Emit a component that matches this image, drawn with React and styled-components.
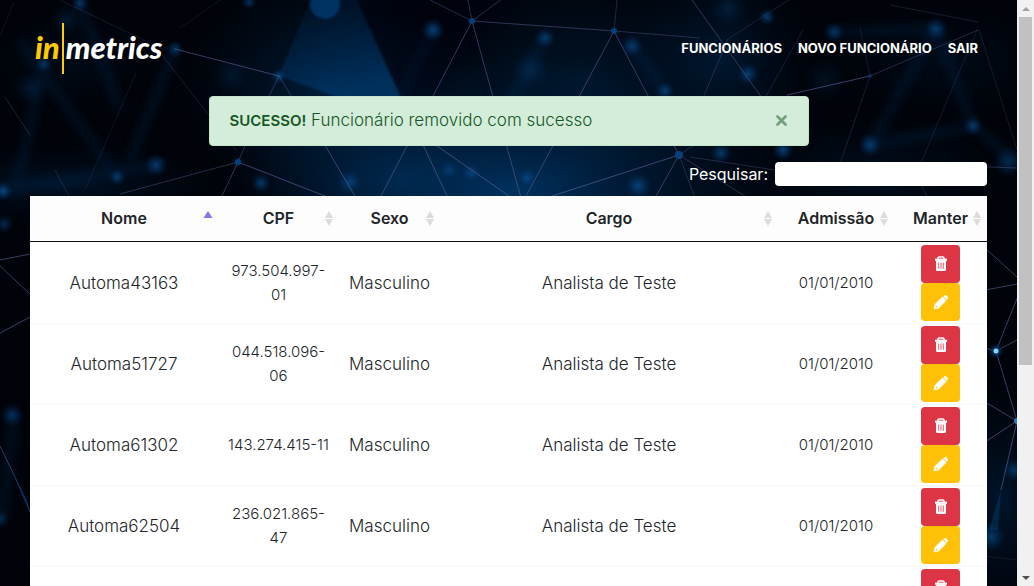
import React from "react";
import styled, { createGlobalStyle, css } from "styled-components";

const GlobalStyle = createGlobalStyle`
  *, *::before, *::after { box-sizing: border-box; }
  body {
    margin: 0;
    background: #00040c;
    color: #212529;
    font-family: Inter, "Open Sans", "Liberation Sans", sans-serif;
    font-size: 16px;
    font-weight: 300;
    line-height: 24px;
  }
`;

const Frame = styled.div`
  display: grid;
  grid-template-columns: minmax(0, 1fr) 17px;
  height: 100vh;
  overflow: hidden;
`;

const Viewport = styled.div`
  display: grid;
  overflow: hidden;
  height: 100vh;
  position: relative;
`;

const Backdrop = styled.svg`
  position: absolute;
  inset: 0;
  width: 100%;
  height: 100%;
`;

const Page = styled.div`
  position: relative;
  height: 100vh;
  overflow-y: auto;
  scrollbar-width: none;
  padding: 0 30px;
`;

const Header = styled.header`
  display: flex;
  justify-content: space-between;
  align-items: center;
  height: 96px;
  padding: 0 9px 0 5px;
`;

const Logo = styled.a`
  display: flex;
  align-items: flex-start;
  gap: 2px;
  color: #fff;
  font: italic 900 31px/48px Lato, sans-serif;
  text-decoration: none;
`;

const LogoAccent = styled.span`
  color: #ffcb05;
`;

const LogoBar = styled.span`
  width: 2px;
  height: 51px;
  background: #ffcb05;
`;

const Nav = styled.nav`
  display: flex;
  gap: 16px;
`;

const NavLink = styled.a`
  color: #fff;
  font-size: 13px;
  font-weight: 700;
  text-decoration: none;
  text-transform: uppercase;
`;

const Alert = styled.div`
  display: flex;
  align-items: center;
  justify-content: space-between;
  width: 100%;
  max-width: 600px;
  height: 50px;
  margin: 0 auto 16px;
  padding: 0 20px 2px;
  border: 1px solid #c3e6cb;
  border-radius: 4px;
  background: #d4edda;
  color: #155724;
  font-size: 17px;
  strong { font-size: 15px; font-weight: 600; }
`;

const CloseButton = styled.button`
  display: flex;
  padding: 0;
  border: 0;
  background: none;
  color: #155724;
  opacity: 0.5;
  cursor: pointer;
`;

const Search = styled.label`
  display: flex;
  justify-content: flex-end;
  align-items: center;
  gap: 7px;
  margin-bottom: 10px;
  color: #fff;
  font-weight: 400;
`;

const SearchInput = styled.input`
  width: 212px;
  height: 24px;
  padding: 0 8px;
  border: 0;
  border-radius: 4px;
  background: #fff;
  font: inherit;
  color: #212529;
`;

const Table = styled.table`
  width: 100%;
  table-layout: fixed;
  border-collapse: separate;
  border-spacing: 0;
  border-radius: 2px;
  background: #fff;
  text-align: center;
`;

const Column = styled.col`
  width: ${(p) => (p.$width ? `${p.$width}px` : "auto")};
`;

const HeadCell = styled.th`
  height: 46px;
  padding: 0 0 1px;
  border-bottom: 1px solid #111;
  background: #fdfdfd;
`;

const SortButton = styled.button`
  display: grid;
  grid-template-columns: minmax(0, 1fr) auto minmax(0, 1fr);
  align-items: center;
  width: 100%;
  padding: 0 5px;
  border: 0;
  background: none;
  color: #212529;
  font: inherit;
  font-weight: 600;
  cursor: pointer;
  svg { grid-column: 3; justify-self: end; }
`;

const SortLabel = styled.span`
  grid-column: 2;
`;

const Cell = styled.td`
  height: 81px;
  padding: 2px 0;
  border-top: 1px solid #f8f9fa;
  vertical-align: middle;
  white-space: pre;
  font-size: ${(p) => (p.$numeric ? "15px" : "17px")};
`;

const Actions = styled.div`
  display: flex;
  flex-direction: column;
  align-items: center;
`;

const ActionButton = styled.button`
  display: flex;
  justify-content: center;
  align-items: center;
  width: 39px;
  height: 38px;
  padding: 0;
  border: 0;
  border-radius: 4px;
  color: #fff;
  cursor: pointer;
  ${(p) => (p.$danger ? css`background: #dc3545;` : css`background: #ffc107;`)}
`;

const ScrollRail = styled.div`
  display: flex;
  flex-direction: column;
  height: 100vh;
  background: #f1f1f1;
`;

const RailArrow = styled.div`
  display: flex;
  justify-content: center;
  align-items: center;
  flex: 0 0 17px;
`;

const RailTrack = styled.div`
  flex: 1;
  padding: 0 2px;
`;

const RailThumb = styled.div`
  height: 63%;
  background: #c1c1c1;
`;

const LINES = [
  [60, 0, 165, 50, 0.25], [175, 49, 279, 76, 0.7], [279, 76, 265, 104, 0.5], [279, 76, 296, 104, 0.5],
  [162, 55, 236, 150, 0.3], [238, 162, 120, 194, 0.5], [238, 162, 330, 198, 0.75], [238, 162, 221, 198, 0.6],
  [238, 162, 252, 130, 0.5], [310, 120, 356, 198, 0.7], [5, 97, 30, 135, 0.35], [136, 73, 85, 190, 0.2],
  [220, 0, 180, 28, 0.2], [55, 170, 70, 198, 0.3], [0, 36, 14, 2, 0.2],
  [430, 0, 472, 21, 0.5], [506, -4, 472, 21, 0.5], [468, 0, 472, 21, 0.5], [472, 21, 614, 31, 0.6],
  [614, 31, 700, 38, 0.45], [472, 21, 380, 198, 0.65], [472, 21, 521, 198, 0.65], [614, 31, 525, 198, 0.65],
  [614, 31, 679, 155, 0.65], [617, 0, 614, 31, 0.4], [400, 96, 448, 198, 0.7], [424, 137, 512, 198, 0.75],
  [679, 155, 546, 198, 0.75], [679, 155, 655, 198, 0.65], [679, 155, 770, 96, 0.4],
  [692, 0, 762, 98, 0.6], [703, 98, 728, 39, 0.4], [728, 39, 795, -4, 0.3], [765, 98, 803, 30, 0.3],
  [870, 76, 787, 95, 0.75], [870, 76, 978, 30, 0.45], [870, 76, 840, 164, 0.3], [870, 76, 860, 28, 0.25],
  [977, 30, 920, 165, 0.25], [690, 157, 775, 170, 0.4], [679, 155, 748, 198, 0.5], [979, 30, 1017, 150, 0.25],
  [890, 5, 978, 22, 0.3], [940, 165, 1017, 168, 0.5], [910, 165, 928, 198, 0.3], [679, 155, 695, 198, 0.4],
  [987, 250, 1017, 277, 0.7], [980, 291, 1017, 284, 0.7], [1020, 291, 996, 351, 0.75], [996, 351, 1017, 340, 0.7],
  [996, 351, 985, 348, 0.8], [996, 351, 1017, 421, 0.75], [985, 402, 1017, 421, 0.75], [985, 442, 1017, 421, 0.75],
  [1017, 421, 1001, 490, 0.75], [985, 556, 1017, 560, 0.2],
  [0, 260, 30, 254, 0.75], [0, 266, 30, 294, 0.7], [0, 333, 30, 317, 0.75], [0, 446, 14, 475, 0.7],
];

const GLOWS = [
  [80, 3, 9, 0.7], [67, 20, 18, 0.25], [175, 49, 9, 0.65], [44, 64, 9, 0.6], [30, 88, 18, 0.25],
  [117, 177, 9, 0.7], [156, 165, 12, 0.7], [261, 183, 10, 0.7], [3, 191, 10, 0.9], [4, 224, 10, 0.5],
  [232, 75, 20, 0.2], [279, 76, 8, 0.8], [238, 162, 7, 0.4], [249, 2, 8, 0.6],
  [433, 30, 12, 0.8], [545, 38, 11, 0.7], [632, 46, 12, 0.7], [665, 91, 10, 0.7], [531, 70, 22, 0.3],
  [449, 170, 11, 0.6], [471, 173, 12, 0.7], [527, 178, 12, 0.8], [638, 186, 14, 0.8], [350, 182, 14, 0.7],
  [767, 17, 9, 0.7], [834, 32, 11, 0.65], [936, 29, 12, 0.7], [748, 74, 12, 0.7], [728, 8, 20, 0.3],
  [825, 80, 24, 0.18], [870, 145, 12, 0.75], [973, 126, 10, 0.7], [721, 153, 11, 0.7], [783, 150, 11, 0.8],
  [1008, 162, 16, 0.5], [12, 415, 12, 0.6], [0, 519, 10, 0.5], [991, 537, 15, 0.7], [1014, 470, 12, 0.6],
];

const HAZE = [
  [330, 90, 150, 120, 0.55], [510, 190, 290, 130, 0.95], [400, 180, 160, 90, 0.5], [580, 80, 220, 120, 0.35],
  [720, 60, 100, 100, 0.35], [945, 60, 130, 60, 0.15], [870, 175, 140, 60, 0.25], [60, 185, 170, 40, 0.3],
  [1000, 500, 70, 120, 0.35], [70, 60, 90, 50, 0.15],
];

const BEAMS = [
  [44, 64, 14, 196], [175, 49, 130, 160], [80, 3, 120, 110], [936, 29, 973, 126], [936, 29, 870, 145],
  [973, 126, 1017, 162], [433, 30, 400, 96], [545, 38, 500, 120], [834, 32, 936, 29], [632, 46, 665, 91],
  [0, 190, 160, 165], [870, 145, 973, 126], [14, 415, 2, 519], [117, 177, 20, 40],
];

function NetworkBackdrop() {
  return (
    <Backdrop viewBox="0 0 1017 586" preserveAspectRatio="xMidYMid slice" aria-hidden="true">
      <defs>
        <radialGradient id="glow">
          <stop offset="0" stopColor="#0a4d8c" />
          <stop offset="0.45" stopColor="#05386b" stopOpacity="0.7" />
          <stop offset="1" stopColor="#012046" stopOpacity="0" />
        </radialGradient>
        <radialGradient id="haze">
          <stop offset="0" stopColor="#003768" />
          <stop offset="1" stopColor="#001a38" stopOpacity="0" />
        </radialGradient>
        <linearGradient id="wedge" x1="0" y1="0" x2="0.4" y2="1">
          <stop offset="0" stopColor="#001a38" stopOpacity="0.4" />
          <stop offset="1" stopColor="#003a6e" />
        </linearGradient>
        <filter id="soften" x="-20%" y="-20%" width="140%" height="140%"><feGaussianBlur stdDeviation="5" /></filter>
        <filter id="edge"><feGaussianBlur stdDeviation="1" /></filter>
      </defs>
      <rect width="1017" height="586" fill="#000309" />
      {HAZE.map(([x, y, rx, ry, o], i) => (
        <ellipse key={i} cx={x} cy={y} rx={rx} ry={ry} fill="url(#haze)" opacity={o} />
      ))}
      <g filter="url(#soften)" stroke="#003261" strokeWidth="9" opacity="0.28">
        {BEAMS.map(([x1, y1, x2, y2], i) => <line key={i} x1={x1} y1={y1} x2={x2} y2={y2} />)}
      </g>
      <path d="M401 0H520L430 100H402L357 0Z" fill="#000610" opacity="0.35" filter="url(#soften)" />
      <path d="M312 -4H355L402 100H345L279 76Z" fill="url(#wedge)" opacity="0.75" filter="url(#edge)" />
      <circle cx="325" cy="4" r="15" fill="#00417a" opacity="0.7" filter="url(#edge)" />
      {GLOWS.map(([x, y, r, o], i) => (
        <circle key={i} cx={x} cy={y} r={r} fill="url(#glow)" opacity={o} />
      ))}
      {LINES.map(([x1, y1, x2, y2, o], i) => (
        <line key={i} x1={x1} y1={y1} x2={x2} y2={y2} stroke="#6266a0" strokeWidth="1" opacity={o * 0.8} />
      ))}
      <path d="M1001 490L989 530L998 530Z" fill="#064477" opacity="0.4" />
      <path d="M14 475L30 512L26 500Z" fill="#0a5296" stroke="#0a4a86" opacity="0.7" />
      <g fill="#06407a">
        <circle cx="472" cy="21" r="3" />
        <circle cx="614" cy="31" r="3" />
        <circle cx="679" cy="155" r="4" />
        <circle cx="238" cy="162" r="3" />
        <circle cx="870" cy="76" r="2" opacity="0.6" />
      </g>
      <circle cx="996" cy="351" r="8" fill="url(#glow)" />
      <circle cx="996" cy="351" r="2.5" fill="#8fd0f5" />
      <circle cx="1017" cy="421" r="3" fill="#2879bd" />
    </Backdrop>
  );
}

function SortIcon({ active }) {
  return (
    <svg width="10" height="16" viewBox="0 0 10 16" aria-hidden="true">
      {active ? (
        <path d="M5 1L9.5 8H0.5Z" fill="#7b7be0" />
      ) : (
        <path d="M5 1L9 8H1ZM1 9H9L5 16Z" fill="#dcdcdc" />
      )}
    </svg>
  );
}

function TrashIcon() {
  return (
    <svg width="14" height="16" viewBox="0 0 14 16" aria-hidden="true">
      <path d="M4 3V2Q4 1 5 1H9Q10 1 10 2V3" fill="none" stroke="currentColor" strokeWidth="1.4" />
      <path d="M1 2.6H13V4.8H1Z" fill="currentColor" />
      <path d="M2 4.5H12V13.5Q12 15 10.5 15H3.5Q2 15 2 13.5Z" fill="currentColor" />
      <path d="M4.7 6.5V12.8M7 6.5V12.8M9.3 6.5V12.8" stroke="#dc3545" strokeWidth="0.8" />
    </svg>
  );
}

function PencilIcon() {
  return (
    <svg width="16" height="16" viewBox="0 0 16 16" aria-hidden="true">
      <path d="M10.3 2.2L11.3 1.3Q12.3 0.5 13.3 1.4L14.7 2.8Q15.5 3.8 14.7 4.8L13.8 5.7Z" fill="currentColor" />
      <path d="M9.5 3L13 6.5L5.7 13.8L1.5 14.8Q1 14.8 1.1 14.3L2.2 10.3Z" fill="currentColor" stroke="currentColor" strokeWidth="1" strokeLinejoin="round" />
      <path d="M3.1 11.4L4.6 12.9L3.1 13.4L2.6 12.9Z" fill="#ffc107" />
    </svg>
  );
}

function CloseIcon() {
  return (
    <svg width="13" height="13" viewBox="0 0 13 13" aria-hidden="true">
      <path d="M2.5 2.5L10.5 10.5M10.5 2.5L2.5 10.5" stroke="currentColor" strokeWidth="2.8" strokeLinecap="round" />
    </svg>
  );
}

const COLUMNS = [
  { label: "Nome", width: 188, sorted: true },
  { label: "CPF", width: 121 },
  { label: "Sexo", width: 101 },
  { label: "Cargo" },
  { label: "Admissão", width: 116 },
  { label: "Manter", width: 93 },
];

const EMPLOYEES = [
  { name: "Automa43163", cpf: "973.504.997-\n01" },
  { name: "Automa51727", cpf: "044.518.096-\n06" },
  { name: "Automa61302", cpf: "143.274.415-11" },
  { name: "Automa62504", cpf: "236.021.865-\n47" },
  { name: "", cpf: "" },
];

export default function App() {
  return (
    <>
      <GlobalStyle />
      <Frame>
        <Viewport>
          <NetworkBackdrop />
          <Page>
            <Header>
              <Logo href="#" aria-label="inmetrics">
                <LogoAccent>in</LogoAccent>
                <LogoBar />
                <span>metrics</span>
              </Logo>
              <Nav>
                <NavLink href="#funcionarios">Funcionários</NavLink>
                <NavLink href="#novo">Novo Funcionário</NavLink>
                <NavLink href="#sair">Sair</NavLink>
              </Nav>
            </Header>
            <main>
              <Alert role="alert">
                <span><strong>SUCESSO!</strong> Funcionário removido com sucesso</span>
                <CloseButton type="button" aria-label="Fechar"><CloseIcon /></CloseButton>
              </Alert>
              <Search>
                Pesquisar:
                <SearchInput type="search" />
              </Search>
              <Table>
                <colgroup>
                  {COLUMNS.map((c) => <Column key={c.label} $width={c.width} />)}
                </colgroup>
                <thead>
                  <tr>
                    {COLUMNS.map((c) => (
                      <HeadCell key={c.label} scope="col">
                        <SortButton type="button">
                          <SortLabel>{c.label}</SortLabel>
                          <SortIcon active={c.sorted} />
                        </SortButton>
                      </HeadCell>
                    ))}
                  </tr>
                </thead>
                <tbody>
                  {EMPLOYEES.map((e) => (
                    <tr key={e.name}>
                      <Cell>{e.name}</Cell>
                      <Cell $numeric>{e.cpf}</Cell>
                      <Cell>{e.name && "Masculino"}</Cell>
                      <Cell>{e.name && "Analista de Teste"}</Cell>
                      <Cell $numeric>{e.name && "01/01/2010"}</Cell>
                      <Cell>
                        <Actions>
                          <ActionButton type="button" $danger aria-label={`Excluir ${e.name}`}><TrashIcon /></ActionButton>
                          <ActionButton type="button" aria-label={`Editar ${e.name}`}><PencilIcon /></ActionButton>
                        </Actions>
                      </Cell>
                    </tr>
                  ))}
                </tbody>
              </Table>
            </main>
          </Page>
        </Viewport>
        <ScrollRail aria-hidden="true">
          <RailArrow>
            <svg width="8" height="4" viewBox="0 0 8 4"><path d="M4 0L8 4H0Z" fill="#a3a3a3" /></svg>
          </RailArrow>
          <RailTrack><RailThumb /></RailTrack>
          <RailArrow>
            <svg width="8" height="4" viewBox="0 0 8 4"><path d="M0 0H8L4 4Z" fill="#505050" /></svg>
          </RailArrow>
        </ScrollRail>
      </Frame>
    </>
  );
}
